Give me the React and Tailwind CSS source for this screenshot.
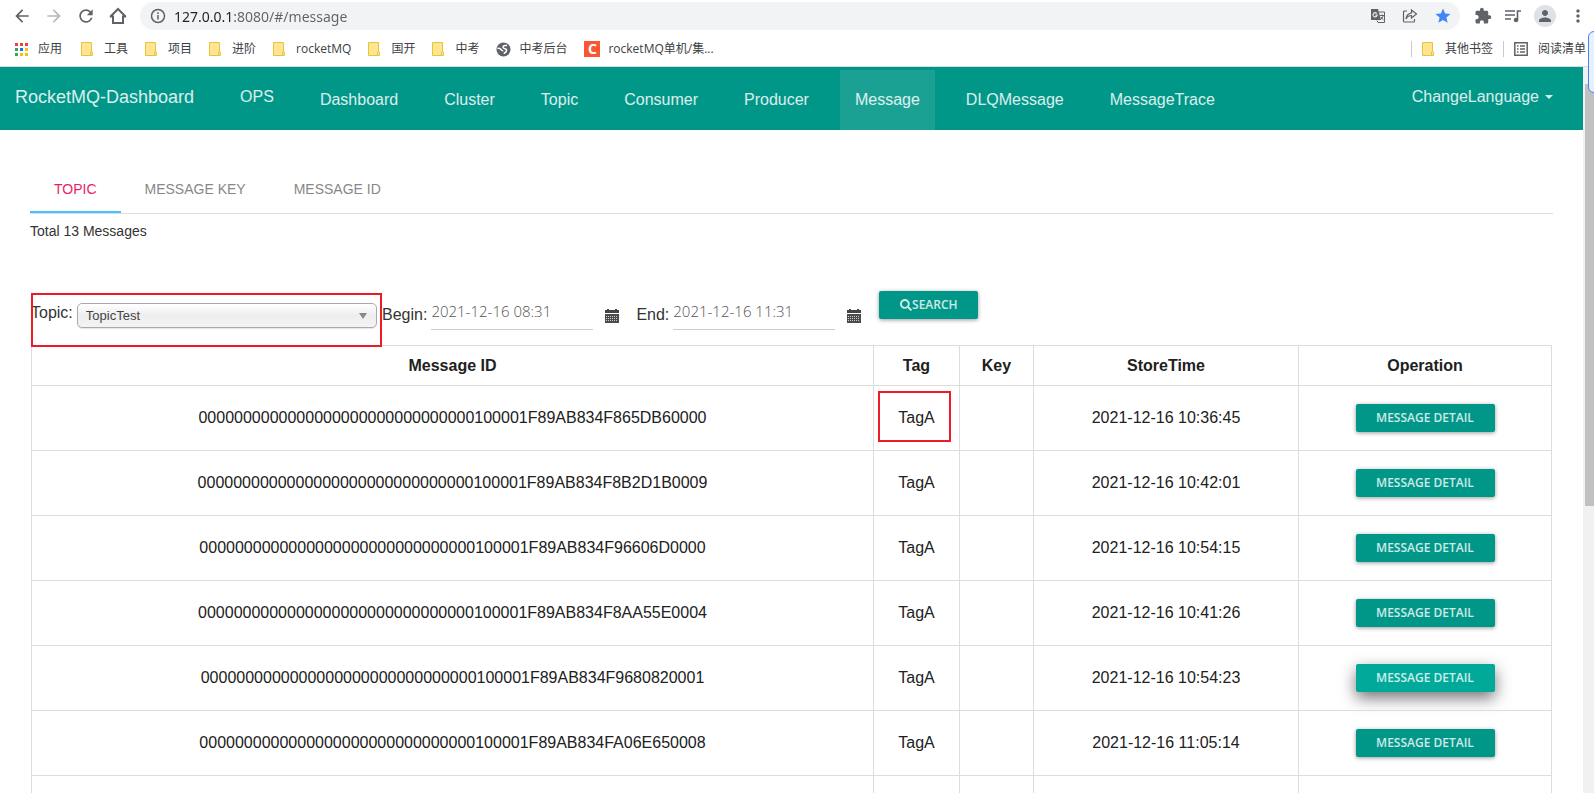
import React, { useState } from 'react';
import { FaSearch } from 'react-icons/fa';
import { MdExtension, MdPerson, MdStar, MdMoreVert, MdArrowBack, MdArrowForward, MdRefresh } from 'react-icons/md';

const BOOKMARKS = ['工具', '项目', '进阶', 'rocketMQ', '国开', '中考'];

const NAV_ITEMS = ['Dashboard', 'Cluster', 'Topic', 'Consumer', 'Producer', 'Message', 'DLQMessage', 'MessageTrace'];

const TABS = ['Topic', 'Message Key', 'Message ID'];

const MESSAGES = [
  { id: '0000000000000000000000000000000100001F89AB834F865DB60000', tag: 'TagA', key: '', time: '2021-12-16 10:36:45', marked: true },
  { id: '0000000000000000000000000000000100001F89AB834F8B2D1B0009', tag: 'TagA', key: '', time: '2021-12-16 10:42:01' },
  { id: '0000000000000000000000000000000100001F89AB834F96606D0000', tag: 'TagA', key: '', time: '2021-12-16 10:54:15' },
  { id: '0000000000000000000000000000000100001F89AB834F8AA55E0004', tag: 'TagA', key: '', time: '2021-12-16 10:41:26' },
  { id: '0000000000000000000000000000000100001F89AB834F9680820001', tag: 'TagA', key: '', time: '2021-12-16 10:54:23', raised: true },
  { id: '0000000000000000000000000000000100001F89AB834FA06E650008', tag: 'TagA', key: '', time: '2021-12-16 11:05:14' },
];

function FolderIcon() {
  return (
    <svg width="13" height="14" viewBox="0 0 13 14" className="shrink-0">
      <path d="M.5.5h10v13H.5z" fill="#ffe58f" stroke="#e8c340" />
      <path d="M9.500 13.500v-3.500q1-1 2 0v3.500z" fill="#ffe58f" stroke="#e8c340" />
    </svg>
  );
}

function AppsIcon() {
  const colors = ['#ea4335', '#ea4335', '#ea4335', '#34a853', '#1a73e8', '#fbbc04', '#34a853', '#fbbc04', '#fbbc04'];
  return (
    <svg width="13" height="13" viewBox="0 0 13 13" className="shrink-0">
      {colors.map((color, i) => (
        <rect key={i} x={(i % 3) * 5} y={Math.floor(i / 3) * 5} width="3" height="3" fill={color} />
      ))}
    </svg>
  );
}

function GlobeIcon() {
  return (
    <svg width="15" height="15" viewBox="0 0 15 15" className="shrink-0">
      <circle cx="7.500" cy="7.500" r="7" fill="#5f6368" />
      <path
        d="M11 3.500H8.800Q7 3.700 7 5q.1 1.300 2 1.700 1.900.5 1.500 2.100-.5 1.900-2.800 2.700M1.500 6.500q2.500-.6 3.500 1 .6 1.300 2.200 1.300"
        fill="none"
        stroke="#fff"
        strokeWidth="1.500"
      />
    </svg>
  );
}

function TranslateIcon() {
  return (
    <svg width="16" height="16" viewBox="0 0 16 16" fill="none">
      <path d="M1 1h7l3 11H1z" fill="#5f6368" />
      <path d="M9 4h5.500v10.500H8L7 12.500" stroke="#5f6368" />
      <path d="M6.800 5.500A2.100 2.100 0 1 0 7.200 7H5.300" stroke="#f1f3f4" strokeWidth="1.100" />
      <path d="M10 7.500h4M12 6.500v1M13.300 7.500q-.6 2.500-2.500 4M11 9q1 1.800 2.500 2.800" stroke="#5f6368" />
    </svg>
  );
}

function CalendarIcon() {
  return (
    <svg width="14" height="14" viewBox="0 0 14 14">
      <path d="M0 1h2V0h2v1h6V0h2v1h2v3H0z" fill="#444" />
      <path d="M0 5h14v9H0z" fill="#4c4c4c" />
      <path d="M1 7.500h12M1 9.500h12M1 11.500h12" stroke="#ccc" strokeDasharray="1 1" />
    </svg>
  );
}

function BrowserBar() {
  return (
    <header className="bg-white text-[#5f6368] font-['Open_Sans','Noto_Sans_CJK_SC',sans-serif]">
      <div className="flex h-8 items-center pr-1.5">
        <div className="flex items-center gap-3 px-3">
          <button aria-label="Back"><MdArrowBack size={20} /></button>
          <button aria-label="Forward" className="text-[#bababa]"><MdArrowForward size={20} /></button>
          <button aria-label="Reload"><MdRefresh size={20} /></button>
          <button aria-label="Home">
            <svg width="20" height="20" viewBox="0 0 20 20" fill="none" stroke="currentColor" strokeWidth="2">
              <path d="M2.500 10.500 10 3l7.500 7.500M1.800 10.500H5V17h10v-6.500h3.200" />
            </svg>
          </button>
        </div>
        <div className="flex h-7 flex-1 items-center rounded-full bg-[#f1f3f4] pl-2.5 pr-2">
          <svg width="16" height="16" viewBox="0 0 16 16" fill="none" stroke="currentColor" strokeWidth="1.500">
            <circle cx="8" cy="8" r="6.500" />
            <path d="M8 7v4.500M8 4.300v1.600" />
          </svg>
          {/* host part is darker than the rest of the url */}
          <input
            aria-label="Address"
            defaultValue="127.0.0.1:8080/#/message"
            className="ml-2 h-6 flex-1 bg-[linear-gradient(to_right,#202124_60px,#5f6368_60px)] bg-clip-text text-sm text-transparent outline-none font-['Noto_Sans',sans-serif]"
          />
          <div className="flex items-center gap-4">
            <button aria-label="Translate"><TranslateIcon /></button>
            <button aria-label="Share">
              <svg width="16" height="16" viewBox="0 0 16 16" fill="none" stroke="currentColor" strokeWidth="1.200">
                <path d="M5 3H2.500Q1.500 3 1.500 4v9q0 1 1 1h9q1 0 1-1v-2M9.500 2l5 4-5 4V7.500Q6 7.500 4 11q.5-5 5.500-6.200z" />
              </svg>
            </button>
            <button aria-label="Bookmark" className="text-[#4285f4]"><MdStar size={18} /></button>
          </div>
        </div>
        <div className="flex items-center gap-3 pl-3.5">
          <button aria-label="Extensions"><MdExtension size={18} /></button>
          <button aria-label="Media">
            <svg width="18" height="16" viewBox="0 0 18 16" fill="none" stroke="currentColor" strokeWidth="1.600">
              <path d="M1 3h10M1 7h10M1 11h6M13.500 12V3H17" />
              <circle cx="12" cy="12" r="1.500" fill="currentColor" />
            </svg>
          </button>
          <button aria-label="Profile" className="flex size-[22px] items-center justify-center rounded-full bg-[#dee1e6]"><MdPerson size={18} /></button>
          <button aria-label="Menu"><MdMoreVert size={20} /></button>
        </div>
      </div>
      <div className="flex h-[35px] items-center border-b border-[#dadce0] pl-[15px] pr-2 text-xs text-[#3c4043]">
        <nav className="flex flex-1 items-center gap-[17px]">
          <a href="#apps" className="flex items-center gap-2.5 pr-0.5"><AppsIcon />应用</a>
          {BOOKMARKS.map((name) => (
            <a key={name} href="#bookmark" className="flex items-center gap-2.5"><FolderIcon />{name}</a>
          ))}
          <a href="#bookmark" className="flex items-center gap-2"><GlobeIcon />中考后台</a>
          <a href="#bookmark" className="flex items-center gap-2">
            <span className="flex size-4 items-center justify-center bg-[#fc5531] text-sm font-bold text-white">C</span>
            rocketMQ单机/集...
          </a>
        </nav>
        <div className="flex items-center gap-2.5">
          <span className="h-4 w-px bg-[#c8cacd]" />
          <a href="#other" className="flex items-center gap-2.5"><FolderIcon />其他书签</a>
          <span className="h-4 w-px bg-[#c8cacd]" />
          <a href="#reading" className="flex items-center gap-2.5">
            <svg width="14" height="14" viewBox="0 0 14 14" fill="none" stroke="#5f6368" strokeWidth="1.500">
              <path d="M.8.8h12.400v12.400H.8zM3 4h1.500M6 4h5M3 7h1.500M6 7h5M3 10h1.500M6 10h5" />
            </svg>
            阅读清单
          </a>
        </div>
      </div>
    </header>
  );
}

function Navbar() {
  return (
    <nav className="flex h-[63px] items-start bg-[#009688] px-[15px] text-base text-white/85">
      <a href="#home" className="pt-[18px] text-lg leading-6">RocketMQ-Dashboard</a>
      <a href="#ops" className="ml-[31px] px-[15px] pt-[18px] leading-6">OPS</a>
      <ul className="ml-4 flex flex-1 gap-4 pt-[3px]">
        {NAV_ITEMS.map((item) => (
          <li key={item}>
            <a
              href={`#${item}`}
              className={`block h-[60px] px-[15px] pt-[18px] leading-6 ${item === 'Message' ? 'bg-white/10' : ''}`}
            >
              {item}
            </a>
          </li>
        ))}
      </ul>
      <button className="flex items-center gap-1.5 px-[15px] pt-[18px] leading-6">
        ChangeLanguage
        <span className="border-x-4 border-t-4 border-x-transparent border-t-white/85" />
      </button>
    </nav>
  );
}

function DateField({ id, label, value }) {
  return (
    <div className="flex items-start">
      <label htmlFor={id} className="pt-2.5 leading-6">{label}</label>
      <input
        id={id}
        defaultValue={value}
        className="ml-1 mt-px h-9 w-[162px] border-b border-[#ccc] pb-0.5 font-['Open_Sans',sans-serif] text-[15px] font-light text-[#555] outline-none"
      />
      <button type="button" aria-label={`${label} calendar`} className="ml-3 mt-4"><CalendarIcon /></button>
    </div>
  );
}

function FilterBar() {
  return (
    <form className="flex items-start pt-[52px] text-base text-[#333]">
      <div className="relative flex h-[52px] w-[351px] items-start">
        <label htmlFor="topic" className="pt-2 leading-6">Topic:</label>
        <div className="relative ml-1 mt-2.5">
          <select
            id="topic"
            className="h-[25px] w-[300px] appearance-none rounded-[5px] border border-[#aaa] bg-linear-to-b from-white via-[#eee] to-[#f4f4f4] px-2 text-[13px] text-[#444] shadow-[0_1px_1px_rgba(0,0,0,0.1)]"
          >
            <option>TopicTest</option>
          </select>
          <span className="pointer-events-none absolute right-2.5 top-[10px] border-x-4 border-t-[6px] border-x-transparent border-t-[#888]" />
        </div>
        <span className="pointer-events-none absolute left-0 top-0 z-10 h-[54px] w-full border-2 border-[#ed1c24]" />
      </div>
      <DateField id="begin" label="Begin:" value="2021-12-16 08:31" />
      <div className="ml-[17px]">
        <DateField id="end" label="End:" value="2021-12-16 11:31" />
      </div>
      <button
        type="button"
        className="-mt-0.5 ml-[18px] flex h-7 w-[99px] items-center justify-center rounded-xs bg-[#009688] font-['Open_Sans',sans-serif] text-xs font-semibold text-white/80 shadow-[0_1px_4px_rgba(0,0,0,0.4)]"
      >
        <FaSearch size={12} />SEARCH
      </button>
    </form>
  );
}

function MessageTable() {
  return (
    <table className="w-full table-fixed border-collapse text-center text-base text-[#212121] [&_td]:border [&_td]:border-[#ddd] [&_th]:border [&_th]:border-[#ddd]">
      <colgroup>
        <col />
        <col className="w-[86px]" />
        <col className="w-[74px]" />
        <col className="w-[265px]" />
        <col className="w-[253px]" />
      </colgroup>
      <thead>
        <tr className="h-10">
          <th>Message ID</th>
          <th>Tag</th>
          <th>Key</th>
          <th>StoreTime</th>
          <th>Operation</th>
        </tr>
      </thead>
      <tbody>
        {MESSAGES.map((msg) => (
          <tr key={msg.id} className="h-[65px]">
            <td>{msg.id}</td>
            <td className="relative">
              {msg.tag}
              {msg.marked && <span className="absolute left-1 top-[5px] h-[51px] w-[73px] border-2 border-[#ed1c24]" />}
            </td>
            <td>{msg.key}</td>
            <td>{msg.time}</td>
            <td>
              <button
                className={`mx-auto block h-7 w-[139px] rounded-xs font-['Open_Sans',sans-serif] text-xs font-semibold text-white/80 ${
                  msg.raised
                    ? 'bg-[#00a99a] shadow-[0_6px_16px_rgba(0,0,0,0.55)]'
                    : 'bg-[#009688] shadow-[0_1px_4px_rgba(0,0,0,0.4)]'
                }`}
              >
                MESSAGE DETAIL
              </button>
            </td>
          </tr>
        ))}
        <tr className="h-[65px]">
          <td />
          <td />
          <td />
          <td />
          <td />
        </tr>
      </tbody>
    </table>
  );
}

function App() {
  const [activeTab, setActiveTab] = useState('Topic');

  return (
    <div className="relative flex h-screen flex-col overflow-hidden bg-white font-['Liberation_Sans',Arial,sans-serif]">
      <BrowserBar />
      <div className="flex min-h-0 flex-1">
        <div className="min-w-0 flex-1 overflow-hidden">
          <Navbar />
          <main className="px-[30px] pt-9">
            <div className="flex h-12 border-b border-[#ddd] text-sm">
              {TABS.map((tab) => (
                <button
                  key={tab}
                  onClick={() => setActiveTab(tab)}
                  className={`border-b-2 px-6 uppercase ${
                    activeTab === tab ? 'border-[#40c4ff] text-[#e91e63]' : 'border-transparent text-[#888]'
                  }`}
                >
                  {tab}
                </button>
              ))}
            </div>
            <p className="pt-[7px] text-sm leading-5 text-[#333]">Total 13 Messages</p>
            <div className="px-px">
              <FilterBar />
              <MessageTable />
            </div>
          </main>
        </div>
        <div className="w-[11px] bg-[#f1f1f1] pl-0.5 pt-[17px]">
          <div className="h-[422px] bg-[#c1c1c1]" />
        </div>
      </div>
      <div className="absolute -right-2 top-[31px] h-[62px] w-3.5 rounded-md border border-[#4285f4] bg-[#e8f0fe]" />
    </div>
  );
}

export default App;
